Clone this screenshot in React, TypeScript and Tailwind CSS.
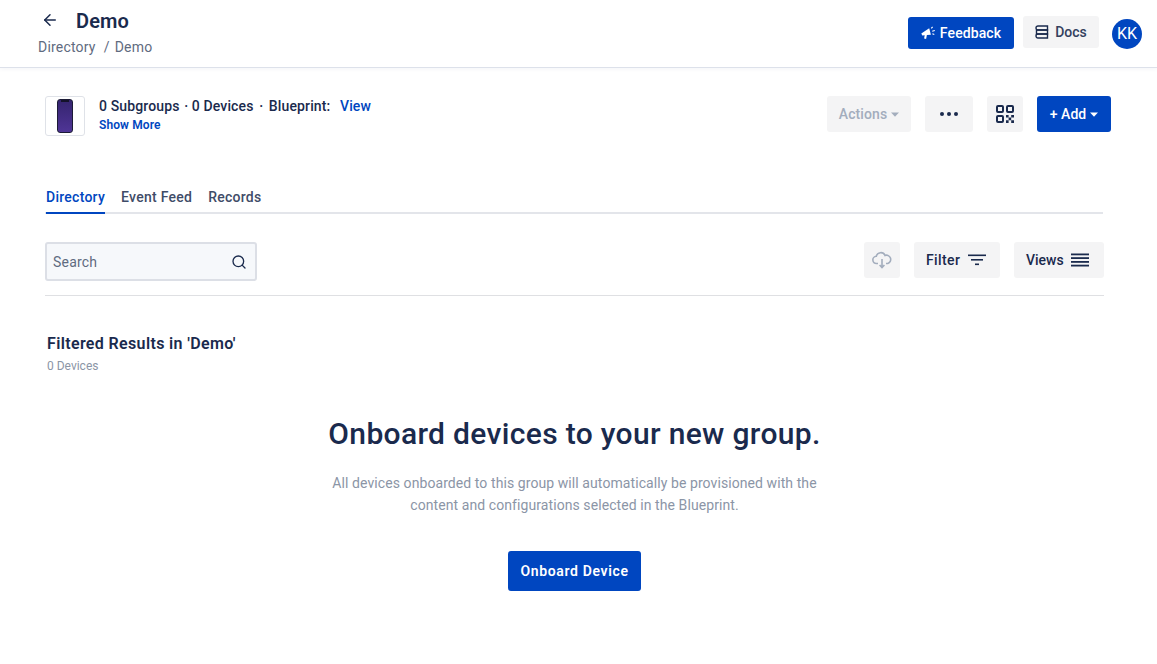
import React from 'react';
import { ArrowLeft, Search } from 'lucide-react';

const Caret = ({ className }: { className: string }) => (
  <svg viewBox="0 0 8 5" className={`w-2 h-[5px] ${className}`} fill="currentColor">
    <path d="M0 0.5h8L4 4.8z" />
  </svg>
);

const Megaphone = () => (
  <svg viewBox="0 0 14 14" className="w-[14px] h-[14px]" fill="white">
    <path d="M0.3 7.4 8.2 2.2l1.7 6.6-4 .3-.8 3.9-2-.4.6-3.3-2.4.3z" />
    <path d="M10.3 2.4 11.6.8M11.2 5.2l2.6-.7M11.4 7.8l1.9.7" stroke="white" strokeWidth="1.1" />
  </svg>
);

const DocsIcon = () => (
  <svg viewBox="0 0 14 14" className="w-[14px] h-[14px]" fill="none" stroke="#1a2a4d" strokeWidth="1.4">
    <path d="M3 1h9.5v4H3a2 2 0 0 1 0-4z" />
    <path d="M1.5 5h11v4h-11z" />
    <path d="M3 9h9.5v4H3a2 2 0 0 1 0-4z" />
  </svg>
);

const QrIcon = () => (
  <svg viewBox="0 0 18 18" className="w-[18px] h-[18px]" fill="none" stroke="#1a2a4d" strokeWidth="2">
    <rect x="1" y="1" width="6" height="6" rx="1" />
    <rect x="11" y="1" width="6" height="6" rx="1" />
    <rect x="1" y="11" width="6" height="6" rx="1" />
    <path d="M10 10h2.6v2.6H10zM15.2 10H18v2.6h-2.8zM12.6 12.6h2.6v2.6h-2.6zM10 15.2h2.6V18H10zM15.2 15.2H18V18h-2.8z" fill="#1a2a4d" stroke="none" />
  </svg>
);

const CloudIcon = () => (
  <svg viewBox="0 0 20 18" className="w-5 h-[18px]" fill="none" stroke="#a3adbd" strokeWidth="1.6">
    <path d="M6 12.5H4.6a3.6 3.6 0 0 1-.3-7.2A4.6 4.6 0 0 1 13 4.4a3.9 3.9 0 0 1 2.8 8.1H14" />
    <path d="M10 8v8.5M7.6 14l2.4 2.6 2.4-2.6" />
  </svg>
);

const FilterIcon = () => (
  <svg viewBox="0 0 18 12" className="w-[18px] h-3" fill="#1a2a4d">
    <rect x="0" y="0.5" width="18" height="1.6" />
    <rect x="3" y="5" width="12" height="1.6" />
    <rect x="7" y="9.5" width="4" height="1.6" />
  </svg>
);

const ViewsIcon = () => (
  <svg viewBox="0 0 18 14" className="w-[18px] h-[14px]" fill="#1a2a4d">
    <rect x="0" y="0.5" width="18" height="1.8" />
    <rect x="0" y="4.2" width="18" height="1.8" />
    <rect x="0" y="8" width="18" height="1.8" />
    <rect x="0" y="11.7" width="18" height="1.8" />
  </svg>
);

export default function App() {
  return (
    <div className="min-h-screen bg-white text-[#1a2a4d] font-['Roboto','Liberation_Sans',sans-serif]">
      {/* header */}
      <header className="h-[68px] flex justify-between border-b border-[#dde1ea] shadow-[0_1px_4px_rgba(50,70,120,0.06)] pl-[38px] pr-[15px]">
        <div>
          <div className="flex items-center h-[20px] mt-[11px]">
            <ArrowLeft className="ml-[3px] -mt-[2px] w-[18px] h-[18px]" strokeWidth={2} />
            <h1 className="ml-[17px] text-[20px] leading-none font-semibold tracking-[0.1px]">Demo</h1>
          </div>
          <p className="mt-[6px] text-sm leading-5 text-[#5f6b80] tracking-[0.2px]">
            Directory<span className="ml-[8px] mr-[5px]">/</span>Demo
          </p>
        </div>
        <div className="flex items-start">
          <button className="mt-[17px] w-[106px] h-8 rounded-[3px] bg-[#0046c0] text-white text-sm font-medium flex items-center justify-center gap-[5px] tracking-[0.1px]">
            <Megaphone />
            Feedback
          </button>
          <button className="mt-4 ml-[9px] w-[76px] h-8 rounded-[3px] bg-[#f4f4f5] text-sm font-medium text-[#33415e] flex items-center justify-center gap-[6px]">
            <DocsIcon />
            Docs
          </button>
          <div className="mt-[19px] ml-[13px] w-[30px] h-[30px] rounded-full bg-[#0046c0] text-white text-base flex items-center justify-center">
            KK
          </div>
        </div>
      </header>

      <main className="pl-[45px] pr-[53px]">
        {/* group summary */}
        <section className="flex justify-between pt-7">
          <div className="flex">
            <div className="w-10 h-10 rounded-[3px] border border-[#dfe2e8] flex items-center justify-center">
              <div className="relative w-4 h-[34px] rounded-[3px] border border-[#1c1b36] bg-gradient-to-b from-[#35246f] to-[#4f3596]">
                <div className="absolute top-0 left-[3px] w-2 h-[2px] bg-[#14122a]" />
              </div>
            </div>
            <div className="ml-[14px]">
              <p className="text-sm leading-5 font-medium tracking-[0.13px]">
                0 Subgroups <span className="ml-[1px]">·</span> 0 Devices <span className="mx-[2px]">·</span> Blueprint: <span className="ml-[6px] text-[#0046c0]">View</span>
              </p>
              <p className="mt-[1px] text-xs leading-4 font-semibold text-[#0046c0] tracking-[0.1px]">Show More</p>
            </div>
          </div>
          <div className="flex gap-[14px] -mr-[7px] h-9">
            <button className="w-[84px] rounded-[3px] bg-[#f4f4f5] text-sm font-medium text-[#a3adbd] flex items-center justify-center gap-1 tracking-[0.1px]">
              Actions
              <Caret className="text-[#a3adbd]" />
            </button>
            <button className="w-12 rounded-[3px] bg-[#f4f4f5] flex items-center justify-center gap-[3px]">
              <span className="w-1 h-1 rounded-full bg-[#1a2a4d]" />
              <span className="w-1 h-1 rounded-full bg-[#1a2a4d]" />
              <span className="w-1 h-1 rounded-full bg-[#1a2a4d]" />
            </button>
            <button className="w-9 rounded-[3px] bg-[#f4f4f5] flex items-center justify-center">
              <QrIcon />
            </button>
            <button className="w-[74px] rounded-[3px] bg-[#0046c0] text-white text-sm font-medium flex items-center justify-center gap-1">
              + Add
              <Caret className="text-white" />
            </button>
          </div>
        </section>

        {/* tabs */}
        <nav className="mt-[44px] flex gap-4 h-[34px] mr-[1px] border-b-2 border-[#e3e5ea] text-sm font-medium text-[#3f4c68] tracking-[0.26px]">
          <a className="ml-[1px] h-[34px] leading-[34px] border-b-2 border-[#0046c0] text-[#0046c0]">Directory</a>
          <a className="leading-[34px]">Event Feed</a>
          <a className="leading-[34px]">Records</a>
        </nav>

        {/* toolbar */}
        <section className="mt-7 flex justify-between border-b border-[#dfe0e3] h-[54px]">
          <div className="w-[212px] h-[39px] rounded-[3px] border-2 border-[#dcdfe6] bg-[#f6f8fb] flex items-center justify-between pl-[6px] pr-[8px]">
            <span className="text-sm text-[#5f6b80] tracking-[0.2px]">Search</span>
            <Search className="w-4 h-4 text-[#1a2a4d]" strokeWidth={2} />
          </div>
          <div className="flex gap-[14px] h-9">
            <button className="w-9 rounded-[3px] bg-[#f4f4f5] flex items-center justify-center">
              <CloudIcon />
            </button>
            <button className="w-[86px] rounded-[3px] bg-[#f4f4f5] text-sm font-medium flex items-center pl-3 gap-2 tracking-[0.4px]">
              Filter
              <FilterIcon />
            </button>
            <button className="w-[90px] rounded-[3px] bg-[#f4f4f5] text-sm font-medium flex items-center pl-3 gap-[7px]">
              Views
              <ViewsIcon />
            </button>
          </div>
        </section>

        {/* results */}
        <section className="mt-[37px] pl-[2px]">
          <h2 className="text-base leading-[22px] font-semibold tracking-[0.36px]">Filtered Results in 'Demo'</h2>
          <p className="mt-[3px] text-xs leading-4 text-[#8b95a6]">0 Devices</p>
        </section>

        {/* empty state */}
        <section className="mt-10 flex flex-col items-center text-center">
          <h2 className="text-[30px] leading-[40px] font-medium tracking-[0.33px]">Onboard devices to your new group.</h2>
          <p className="mt-[18px] text-sm leading-[22px] text-[#8b95a6] tracking-[0.08px]">
            All devices onboarded to this group will automatically be provisioned with the
            <br />
            content and configurations selected in the Blueprint.
          </p>
          <button className="mt-[35px] w-[133px] h-10 rounded-[3px] bg-[#0046c0] text-white text-sm font-semibold tracking-[0.65px]">
            Onboard Device
          </button>
        </section>
      </main>
    </div>
  );
}
